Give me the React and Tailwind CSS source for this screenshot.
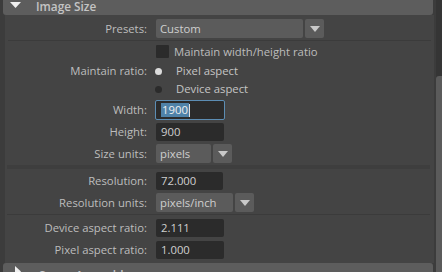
import React from 'react';

const Label = ({ children }) => (
  <div className="w-[142px] shrink-0 text-right text-[#bdbdbd]">{children}</div>
);

const Arrow = () => (
  <svg width="10" height="6" viewBox="0 0 10 6" className="block">
    <path d="M0 0 H10 L5 6 Z" fill="#c8c8c8" />
  </svg>
);

const Dropdown = ({ value, width }) => (
  <div className="flex h-[19px] gap-[2px]">
    <div className="flex items-center rounded-[2px] bg-[#5b5b5b] pl-[4px] text-[#cfcfcf]" style={{ width }}>
      {value}
    </div>
    <div className="flex w-[19px] items-center justify-center rounded-[2px] bg-[#5b5b5b]">
      <Arrow />
    </div>
  </div>
);

const Field = ({ value, w = 'w-[68px]' }) => (
  <div className={`flex h-[18px] ${w} items-center rounded-[2px] bg-[#2b2b2b] pl-[5px] text-[#cfcfcf]`}>{value}</div>
);

const Row = ({ label, children, className = '' }) => (
  <div className={`flex items-center gap-[9px] ${className}`}>
    <Label>{label}</Label>
    {children}
  </div>
);

const App = () => {
  return (
    <div
      className="flex h-[272px] w-[442px] overflow-hidden bg-[#3c3c3c] text-[11.3px] leading-none"
      style={{ fontFamily: '"Open Sans", "Noto Sans", sans-serif' }}
    >
      <div className="flex w-[436px] flex-col">
        {/* Image Size header */}
        <div className="ml-[3px] mt-[-5px] flex h-[20px] w-[430px] shrink-0 items-start rounded-[3px] bg-[#5d5d5d]">
          <svg width="11" height="6" viewBox="0 0 11 6" className="ml-[7px] mt-[7px]">
            <path d="M0 0 H11 L5.5 6 Z" fill="#f0f0f0" />
          </svg>
          <span className="ml-[15px] mt-[6px] text-[11.8px] font-semibold text-[#c4c4c4]">Image Size</span>
        </div>

        <div className="ml-[5px] w-[429px] shrink-0 bg-[#444444] pb-[4px]">
          <Row label="Presets:" className="mt-[4px] h-[19px]">
            <Dropdown value="Custom" width="147px" />
          </Row>
          <div className="mx-[3px] mt-[2px] h-px bg-[#3b3b3b]" />

          <div className="flex h-[21px] items-center pl-[151px]">
            <div className="h-[13px] w-[13px] rounded-[1px] bg-[#2b2b2b]" />
            <span className="ml-[5px] text-[#bdbdbd]">Maintain width/height ratio</span>
          </div>
          <Row label="Maintain ratio:" className="h-[18px]">
            <div className="ml-[-1px] h-[7px] w-[7px] rounded-full bg-[#dcdcdc]" />
            <span className="ml-[5px] text-[#c4c4c4]">Pixel aspect</span>
          </Row>
          <Row label="" className="h-[18px]">
            <div className="ml-[-1px] h-[7px] w-[7px] rounded-full bg-[#2b2b2b]" />
            <span className="ml-[5px] text-[#c4c4c4]">Device aspect</span>
          </Row>

          <Row label="Width:" className="mt-[2px] h-[20px]">
            <div className="ml-[-1px] flex h-[20px] w-[70px] items-center rounded-[2px] border border-[#5c8db3] bg-[#2b2b2b] pl-[5px]">
              <span className="bg-[#4f82a8] px-px py-[1px] text-[#f0f0f0]">1900</span>
              <span className="h-[13px] w-px bg-[#e0e0e0]" />
            </div>
          </Row>
          <Row label="Height:" className="mt-[3px] h-[18px]">
            <Field value="900" />
          </Row>
          <Row label="Size units:" className="mt-[3px] h-[19px]">
            <Dropdown value="pixels" width="55px" />
          </Row>

          <div className="ml-[2px] mr-[4px] mt-[2px] h-[4px] bg-[#3e3e3e]" />

          <Row label="Resolution:" className="mt-[3px] h-[18px]">
            <Field value="72.000" w="w-[67px]" />
          </Row>
          <Row label="Resolution units:" className="mt-[3px] h-[19px]">
            <Dropdown value="pixels/inch" width="77px" />
          </Row>
          <div className="ml-[2px] mr-[4px] mt-[2px] h-px bg-[#3b3b3b]" />

          <Row label="Device aspect ratio:" className="mt-[4px] h-[18px]">
            <Field value="2.111" />
          </Row>
          <Row label="Pixel aspect ratio:" className="mt-[4px] h-[18px]">
            <Field value="1.000" />
          </Row>
        </div>

        {/* Scene Assembly header (collapsed) */}
        <div className="ml-[3px] flex h-[20px] w-[430px] shrink-0 items-start rounded-[3px] bg-[#5d5d5d]">
          <svg width="6" height="11" viewBox="0 0 6 11" className="ml-[12px] mt-[3px]">
            <path d="M0 0 L6 5.5 L0 11 Z" fill="#f0f0f0" />
          </svg>
          <span className="ml-[18px] mt-[7px] text-[11.8px] font-semibold text-[#c4c4c4]">Scene Assembly</span>
        </div>
      </div>

      {/* scrollbar */}
      <div className="flex w-[6px] flex-col bg-[#353535]">
        <div className="mt-[76px] flex-1 rounded-tl-[3px] bg-[#5b5b5b]" />
      </div>
    </div>
  );
};

export default App;
